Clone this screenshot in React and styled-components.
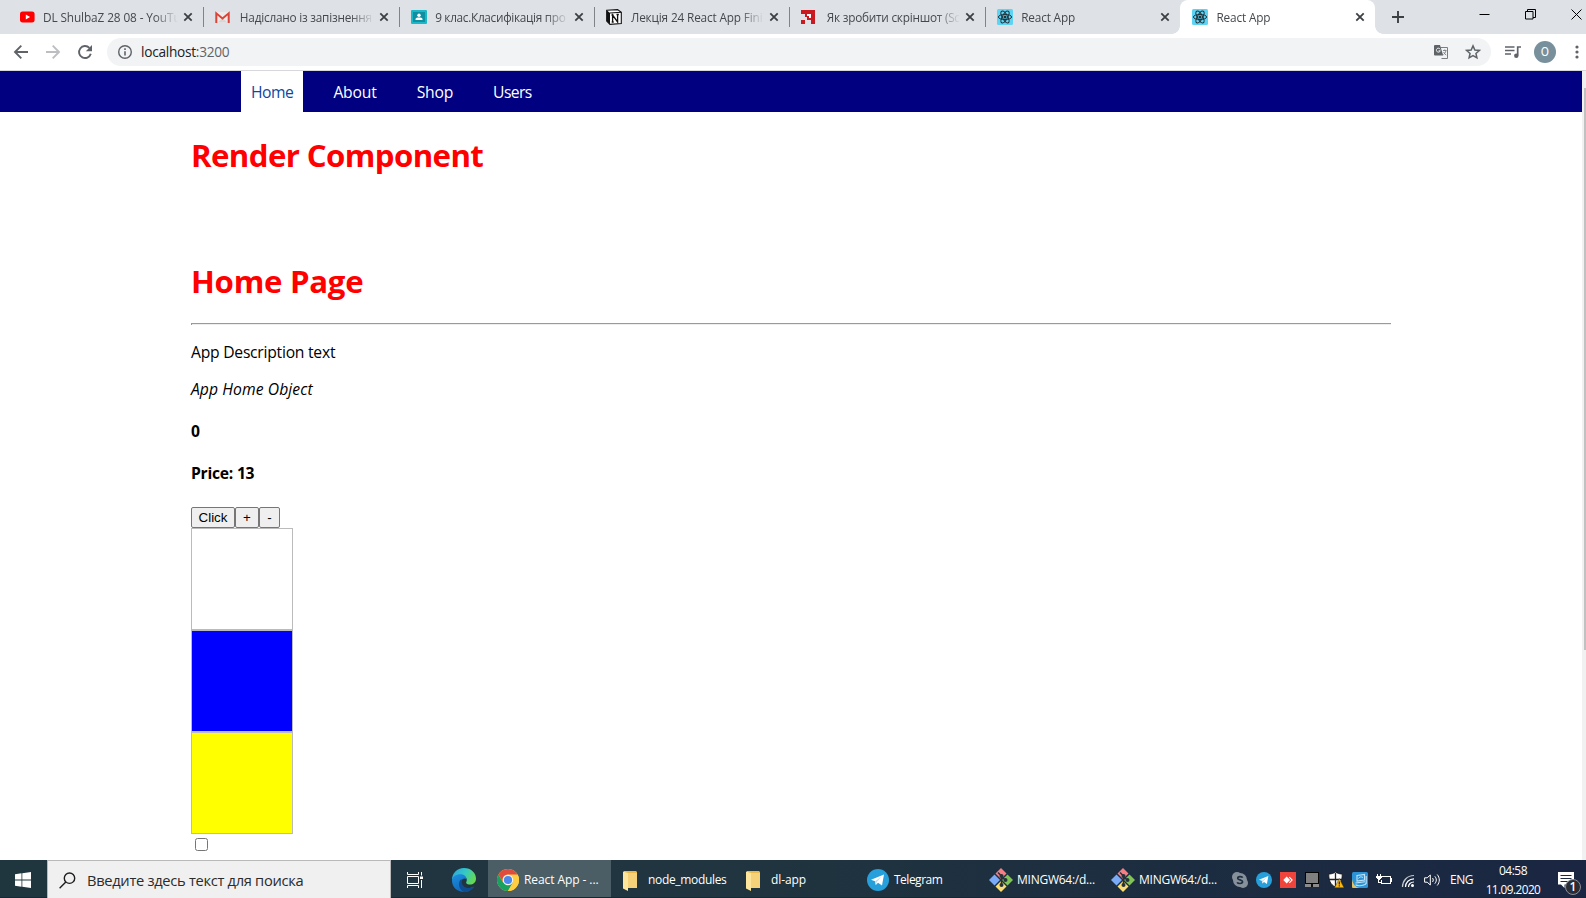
import React from 'react';
import styled, { createGlobalStyle } from 'styled-components';

const Global = createGlobalStyle`
  *, *::before, *::after { box-sizing: border-box; }
  body { margin: 0; background: #fff; overflow: hidden; }
`;

const uiFont = `'Open Sans', 'Noto Sans', sans-serif`;

const Screen = styled.div`
  width: 1586px;
  height: 898px;
  display: flex;
  flex-direction: column;
  overflow: hidden;
  font-family: ${uiFont};
`;

const Text = styled.span`
  font-size: ${(p) => p.$size || 12}px;
  letter-spacing: ${(p) => p.$ls || 0}px;
  white-space: pre;
`;

/* ---------- tab strip ---------- */
const TabStrip = styled.div`
  height: 34px;
  flex: none;
  display: flex;
  padding-left: 8px;
  background: #dee1e6;
`;

const Tab = styled.div`
  position: relative;
  width: 195.33px;
  flex: none;
  display: flex;
  align-items: center;
  padding: 0 7px 0 12px;
  color: #45494d;
  background: ${(p) => (p.$active ? '#fff' : 'transparent')};
  border-radius: 8px 8px 0 0;

  &::before,
  &::after {
    content: '';
    display: ${(p) => (p.$active ? 'block' : 'none')};
    position: absolute;
    bottom: 0;
    width: 8px;
    height: 8px;
  }
  &::before {
    left: -8px;
    background: radial-gradient(circle at 0 0, transparent 7.5px, #fff 8px);
  }
  &::after {
    right: -8px;
    background: radial-gradient(circle at 100% 0, transparent 7.5px, #fff 8px);
  }
`;

const Favicon = styled.span`
  width: 16px;
  height: 16px;
  flex: none;
  display: flex;
  margin-right: ${(p) => p.$gap || 8}px;
`;

const TabTitle = styled(Text)`
  flex: 1;
  min-width: 0;
  line-height: 20px;
  mask-image: linear-gradient(to right, #000 calc(100% - 24px), transparent 100%);
  margin-right: 2px;
`;

const TabClose = styled.span`
  width: 16px;
  height: 16px;
  flex: none;
  display: flex;
`;

const TabDivider = styled.span`
  width: 1px;
  height: 20px;
  margin: 7px -1px 0 0;
  flex: none;
  background: #808388;
`;

const NewTab = styled.span`
  width: 44px;
  padding-left: 1px;
  display: flex;
  align-items: center;
  justify-content: center;
`;

const WindowButtons = styled.div`
  margin-left: auto;
  display: flex;
  gap: 35px;
  padding: 9px 4px 0 0;
`;

/* ---------- toolbar ---------- */
const Toolbar = styled.div`
  height: 37px;
  flex: none;
  display: flex;
  align-items: center;
  padding: 0 3px 0 13px;
  background: #fff;
  border-bottom: 1px solid #d6d8db;
`;

const ToolIcon = styled.span`
  width: 16px;
  height: 16px;
  flex: none;
  display: flex;
  margin-right: ${(p) => p.$gap || 0}px;
`;

const Omnibox = styled.div`
  flex: none;
  width: 1384px;
  height: 28px;
  display: flex;
  align-items: center;
  padding: 0 10px;
  border-radius: 14px;
  background: #f1f3f4;
  margin-right: 14px;
`;

const Url = styled(Text)`
  flex: 1;
  line-height: 20px;
  color: #5f6368;
  b {
    font-weight: 400;
    color: #202124;
  }
`;

const Avatar = styled.span`
  width: 22px;
  height: 22px;
  border-radius: 50%;
  flex: none;
  display: flex;
  align-items: center;
  justify-content: center;
  background: #78909c;
  color: #fff;
  font: 12px/22px Roboto, sans-serif;
  margin: 0 18px 0 13px;
`;

/* ---------- web page ---------- */
const Viewport = styled.div`
  height: 789px;
  flex: none;
  display: flex;
  overflow: hidden;
  background: #fff;
`;

const Page = styled.main`
  width: 1582px;
`;

const ScrollTrack = styled.div`
  width: 4px;
  padding: 17px 0 0 2px;
  background: #f1f1f1;
`;

const ScrollThumb = styled.div`
  height: 562px;
  background: #c1c1c1;
`;

const NavBar = styled.nav`
  height: 41px;
  display: flex;
  padding-left: 231px;
  background: #000080;
`;

const NavLink = styled.a`
  width: ${(p) => p.$w}px;
  margin: 0 10px;
  padding-left: 10px;
  font-size: 15.7px;
  line-height: 43px;
  letter-spacing: ${(p) => p.$ls || 0}px;
  white-space: nowrap;
  color: ${(p) => (p.$active ? '#0d47a1' : '#fff')};
  background: ${(p) => (p.$active ? '#fff' : 'transparent')};
`;

const Container = styled.section`
  width: 1200px;
  margin: 0 auto;
  font-size: 15.7px;
  color: #000;
`;

const Title = styled.h1`
  margin: ${(p) => p.$top}px 0 0;
  font-size: 31.200px;
  line-height: 42px;
  font-weight: 700;
  letter-spacing: ${(p) => p.$ls || 0}px;
  color: #f00;
`;

const Rule = styled.hr`
  height: 2px;
  margin: 21px 0 17px;
  border: solid #9a9a9a;
  border-width: 1px 0 0 1px;
  background: #eee;
`;

const Line = styled.p`
  margin: 0 0 ${(p) => p.$bottom}px;
  line-height: 21px;
  font-style: ${(p) => (p.$italic ? 'italic' : 'normal')};
  font-weight: ${(p) => (p.$bold ? 700 : 400)};
  letter-spacing: ${(p) => p.$ls || 0}px;
`;

const ButtonRow = styled.div`
  display: flex;
`;

const Button = styled.button`
  width: ${(p) => p.$w}px;
  height: 21px;
  padding: 0;
  border: 1px solid #767676;
  border-radius: 2px;
  background: #efefef;
  color: #000;
  font: 13.333px/18px 'Liberation Sans', Arial, sans-serif;
`;

const Swatch = styled.div`
  width: 102px;
  height: 102px;
  border: 1px solid #bbb;
  background: ${(p) => p.$color};
`;

const Checkbox = styled.span`
  display: block;
  width: 13px;
  height: 13px;
  margin: 4px 0 0 4px;
  border: 1px solid #767676;
  border-radius: 2.5px;
  background: #fff;
`;

/* ---------- taskbar ---------- */
const Taskbar = styled.div`
  height: 38px;
  flex: none;
  display: flex;
  align-items: stretch;
  color: #fff;
  background: linear-gradient(to right, #20363f 0%, #20353f 45%, #1d2e40 70%, #1a2642 100%);
  border-bottom: 1px solid #1b2634;
`;

const Start = styled.div`
  width: 47px;
  flex: none;
  display: flex;
  padding: 12px 0 0 15px;
`;

const Search = styled.div`
  width: 344px;
  height: 38px;
  flex: none;
  display: flex;
  padding: 11px 0 0 11px;
  background: #f0f0f0;
  border: 1px solid #b9b9b9;
  border-bottom: 0;
  color: #2b2b2b;
`;

const SearchText = styled(Text)`
  margin-left: 11px;
  line-height: 20px;
  margin-top: -2px;
  height: 20px;
`;

const Task = styled.div`
  width: ${(p) => p.$w}px;
  flex: none;
  display: flex;
  align-items: center;
  padding: 3px 0 0 ${(p) => p.$pad}px;
  gap: ${(p) => p.$gap || 5}px;
  background: ${(p) => (p.$active ? '#4b5e66' : 'transparent')};
  svg { flex: none; }
`;

const TaskLabel = styled(Text)`
  line-height: 20px;
`;

const Tray = styled.div`
  display: flex;
  align-items: center;
  gap: 8px;
  width: ${(p) => p.$w}px;
  flex: none;
  padding-top: 2px;
  margin-left: ${(p) => p.$left || 0}px;
  svg { flex: none; }
`;

const Clock = styled.div`
  width: 60px;
  flex: none;
  margin-left: 9px;
  padding-top: 2px;
  display: flex;
  flex-direction: column;
  align-items: center;
  line-height: 18px;
`;

const Notify = styled.div`
  position: relative;
  width: 30px;
  flex: none;
  margin-left: 15px;
  padding-top: 12px;
`;

const Badge = styled.span`
  position: absolute;
  left: 7px;
  top: 19px;
  width: 16px;
  height: 16px;
  border-radius: 50%;
  border: 1px solid #8b8f98;
  background: #2a2d33;
  color: #fff;
  font-size: 12px;
  font-weight: 600;
  line-height: 14px;
  text-align: center;
`;

/* ---------- drawings ---------- */
const YouTube = () => (
  <svg width="16" height="16" viewBox="0 0 16 16">
    <rect x="0" y="2.4" width="14.6" height="11" rx="2.6" fill="#f00" />
    <path d="M5.8 5.4v5l4.3-2.5z" fill="#fff" />
  </svg>
);
const Gmail = () => (
  <svg width="16" height="16" viewBox="0 0 16 16">
    <path d="M1 3h13v11H1z" fill="#eceaea" />
    <path d="M2.5 13.5 7.5 9l5 4.500z" fill="#d8d5d5" />
    <path d="M1.300 14V4.300L7.500 9.400l6.200-5.100V14" fill="none" stroke="#db4437" strokeWidth="2" />
  </svg>
);
const Classroom = () => (
  <svg width="16" height="16" viewBox="0 0 16 16">
    <rect x="0" y="1" width="16" height="14" rx="1" fill="#1cb7c9" />
    <rect x="2" y="3" width="12" height="10" fill="#0f8f9f" />
    <circle cx="8" cy="6.300" r="1.700" fill="#fff" />
    <path d="M4.500 11V10.200C4.500 9 6.500 8.600 8 8.600s3.500.4 3.500 1.600V11z" fill="#fff" />
  </svg>
);
const Notion = () => (
  <svg width="16" height="16" viewBox="0 0 16 16">
    <path d="M.7 1.300 11.600.6l3.700 2.700v11.200L4 15.400.7 12z" fill="#fff" stroke="#111" strokeWidth="1.100" />
    <path d="M.7 1.300 4 4v11.400L.7 12z" fill="#111" />
    <path d="M3.800 4 15.300 3.300" stroke="#111" strokeWidth="1.100" />
    <path d="M6.600 13V6l5 7V5.500M5.500 6h2M10.500 5.500h2.300M5.700 13h2" stroke="#111" strokeWidth="1.300" fill="none" />
  </svg>
);
const RedMark = () => (
  <svg width="16" height="16" viewBox="0 0 16 16" shapeRendering="crispEdges">
    <path d="M0 1h14v14h-4v-4H6V8H4V5H0zM0 11h4v4H0z" fill="#c91a22" />
    <path d="M6 5h4v4H8V7H6z" fill="#fff" />
  </svg>
);
const ReactLogo = () => (
  <svg width="16" height="16" viewBox="0 0 16 16">
    <rect width="16" height="16" rx="1.500" fill="#5fd3f3" />
    <g fill="none" stroke="#20323a" strokeWidth="1">
      <ellipse cx="8" cy="8" rx="6.600" ry="2.600" />
      <ellipse cx="8" cy="8" rx="6.600" ry="2.600" transform="rotate(60 8 8)" />
      <ellipse cx="8" cy="8" rx="6.600" ry="2.600" transform="rotate(120 8 8)" />
    </g>
    <circle cx="8" cy="8" r="1.500" fill="#20323a" />
  </svg>
);
const Cross = () => (
  <svg width="16" height="16" viewBox="0 0 16 16">
    <path d="m4.300 4.300 7.400 7.400m0-7.400-7.400 7.400" stroke="#3c4043" strokeWidth="1.800" />
  </svg>
);
const Arrow = ({ flip, color }) => (
  <svg width="16" height="16" viewBox="0 0 16 16">
    <path
      transform={flip ? 'rotate(180 8 8)' : undefined}
      d="M15 8H2.200M8.300 1.700 2 8l6.300 6.300"
      fill="none"
      stroke={color}
      strokeWidth="1.900"
    />
  </svg>
);
const Reload = () => (
  <svg width="16" height="16" viewBox="0 0 16 16">
    <path d="M13.800 9.800A6 6 0 1 1 12.400 3.900" fill="none" stroke="#5f6368" strokeWidth="1.900" />
    <path d="M15 1v6.200H8.800z" fill="#5f6368" />
  </svg>
);
const Info = () => (
  <svg width="16" height="16" viewBox="0 0 16 16">
    <circle cx="8" cy="8" r="6.300" fill="none" stroke="#5f6368" strokeWidth="1.400" />
    <path d="M8 7.200v4.300M8 4.300v1.600" stroke="#5f6368" strokeWidth="1.600" />
  </svg>
);
const Translate = () => (
  <svg width="16" height="16" viewBox="0 0 16 16">
    <path d="M7.500 3.500H14.500V14.500H8.500" fill="none" stroke="#7a7e82" strokeWidth="1" />
    <path d="M2 1h5l3.200 10.500H2a1 1 0 0 1-1-1V2a1 1 0 0 1 1-1z" fill="#5f6368" />
    <path d="M7.200 5.300A2 2 0 1 0 7.300 6.800H5.600" fill="none" stroke="#f1f3f4" strokeWidth="1" />
    <path d="M10 6.500h3.500M11.800 5.500v1M12.900 6.700c-.3 1.800-1.200 2.900-2.400 3.800M10.600 8c.6 1.400 1.500 2.400 2.600 3" fill="none" stroke="#7a7e82" strokeWidth=".9" />
  </svg>
);
const Star = () => (
  <svg width="16" height="16" viewBox="0 0 16 16">
    <path d="m8 1.900 1.850 4.100 4.450.45-3.350 3 .95 4.400L8 11.550 4.100 13.850l.95-4.400-3.350-3L6.150 6z" fill="none" stroke="#5f6368" strokeWidth="1.500" />
  </svg>
);
const Queue = () => (
  <svg width="16" height="16" viewBox="0 0 16 16">
    <path d="M0 3h9.500M0 6.500h9.500M0 10h6" stroke="#5f6368" strokeWidth="1.600" />
    <path d="M12.700 11.500V3H16" fill="none" stroke="#5f6368" strokeWidth="1.700" />
    <circle cx="11.300" cy="11.700" r="2.200" fill="#5f6368" />
  </svg>
);
const Kebab = () => (
  <svg width="6" height="16" viewBox="0 0 6 16" fill="#5f6368">
    <circle cx="3" cy="3" r="1.600" />
    <circle cx="3" cy="8" r="1.600" />
    <circle cx="3" cy="13" r="1.600" />
  </svg>
);
const WinLogo = () => (
  <svg width="16" height="16" viewBox="0 0 16 16" fill="#fff">
    <path d="M0 2.200 6.500 1.300V7.500H0zM7.300 1.200 16 0V7.500H7.300zM0 8.400H6.500V14.700L0 13.800zM7.300 8.400H16V16L7.300 14.800z" />
  </svg>
);
const Magnifier = () => (
  <svg width="17" height="17" viewBox="0 0 17 17" fill="none" stroke="#1d1d1d" strokeWidth="1.400">
    <circle cx="10.500" cy="6.200" r="5.200" />
    <path d="M6.800 10 .6 16.200" />
  </svg>
);
const TaskView = () => (
  <svg width="17" height="16" viewBox="0 0 17 16" fill="none" stroke="#fff" strokeWidth="1">
    <path d="M.5 0v2.500h11V0M.5 16v-2.500h11V16M.5 4.500h11v7H.5zM14.500 0v3.500M14.500 8v8" />
    <rect x="13" y="4.500" width="3" height="2.500" fill="#fff" stroke="none" />
  </svg>
);
const Edge = () => (
  <svg width="24" height="24" viewBox="0 0 24 24">
    <defs>
      <linearGradient id="edgeTop" x1="0" y1="0.200" x2="1" y2="0.600">
        <stop offset="0" stopColor="#2aa5e0" />
        <stop offset=".5" stopColor="#35c9c4" />
        <stop offset="1" stopColor="#67d94e" />
      </linearGradient>
      <linearGradient id="edgeLow" x1="0" y1="0" x2=".5" y2="1">
        <stop offset="0" stopColor="#1c8fe0" />
        <stop offset="1" stopColor="#1266b8" />
      </linearGradient>
    </defs>
    <path d="M0 12C0 5 5 0 12 0s12 5 12 10.500c0 4-3 6-6 6-3.500 0-4.500-1.500-3.500-3 .8-1.300.5-5.500-4.500-5.500-4.500 0-9 2-10 4z" fill="url(#edgeTop)" />
    <path d="M0 12.500C.3 8.500 4.500 6.300 8 6.300c4 0 6.300 2 6.500 4.700-1.600-1.200-5.500-.5-5.500 3.500 0 4.500 5 8 13 4-2 3.500-6 5.500-10 5.500C5 24 0 19 0 12.500z" fill="url(#edgeLow)" />
    <path d="M9.500 11c-4.500 3-2.500 11 2.500 13 4 0 8-2 10-5.500-8 4-13-.5-12.500-7.500z" fill="#0d4d92" />
  </svg>
);
const Chrome = () => (
  <svg width="22" height="22" viewBox="0 0 22 22">
    <circle cx="11" cy="11" r="11" fill="#ffcd42" />
    <path d="M1.470 5.500A11 11 0 0 0 11 22l4.760-8.250L11 11 6.240 13.750z" fill="#1aa15f" />
    <path d="M20.530 5.500A11 11 0 0 1 11 22l4.760-8.250V5.500z" fill="#ffcd42" />
    <path d="M1.470 5.500A11 11 0 0 1 20.530 5.500H11a5.500 5.500 0 0 0-4.760 8.250z" fill="#de4b3f" />
    <circle cx="11" cy="11" r="5.200" fill="#f4f4f4" />
    <circle cx="11" cy="11" r="4.100" fill="#4a87ee" />
  </svg>
);
const Folder = () => (
  <svg width="15" height="21" viewBox="0 0 15 21">
    <path d="M1 1h12l1 1v16H5L1 15z" fill="#e9b94e" />
    <path d="M4 3h10v15H4z" fill="#f5d27a" />
    <path d="M0 1.500 5 3v18L0 18.500z" fill="#fde69b" />
  </svg>
);
const Telegram = ({ size }) => (
  <svg width={size} height={size} viewBox="0 0 22 22">
    <circle cx="11" cy="11" r="11" fill="#279fda" />
    <path d="M4 10.800 17 5.500 15 16.500l-4-2.800-2.200 2.200-.8-3.700z" fill="#fff" />
    <path d="m8 12.200 6.500-4.500-4.700 5.200-1 3z" fill="#c3dcec" />
  </svg>
);
const GitBash = () => (
  <svg width="24" height="24" viewBox="0 0 24 24">
    <path d="m12 0 5.500 5.500L12 11 6.500 5.500z" fill="#f47f84" />
    <path d="m18.500 6.500 5.500 5.500-5.500 5.500L13 12z" fill="#80c456" />
    <path d="M5.500 6.500 11 12l-5.500 5.500L0 12z" fill="#7baaf7" />
    <path d="m12 13 5.500 5.500L12 24l-5.500-5.500z" fill="#fbdc73" />
    <path d="M9 4.500 12.500 8v9M12.500 9l4 3" fill="none" stroke="#26323a" strokeWidth="1.500" />
    <circle cx="12.500" cy="8" r="2" fill="#26323a" />
    <circle cx="16.500" cy="12" r="2" fill="#26323a" />
    <circle cx="12.500" cy="17" r="2" fill="#26323a" />
  </svg>
);
const Skype = () => (
  <svg width="16" height="16" viewBox="0 0 16 16">
    <circle cx="5" cy="5" r="5" fill="#87919b" />
    <circle cx="11" cy="11" r="5" fill="#87919b" />
    <circle cx="8" cy="8" r="7" fill="#87919b" />
    <path d="M10.700 5.700C10 4.200 5.700 4.200 5.700 6.200c0 2.100 4.900 1.200 4.900 3.600 0 2.200-4.700 2.200-5.400.4" fill="none" stroke="#1f2f40" strokeWidth="1.700" />
  </svg>
);
const AnyDesk = () => (
  <svg width="16" height="16" viewBox="0 0 16 16">
    <rect width="16" height="16" fill="#ef443b" />
    <path d="M6.700 4.600 10.100 8l-3.400 3.400L3.300 8z" fill="#fff" />
    <path d="m9.700 4.800 3.200 3.200-3.200 3.200-.8-.8L11.300 8 8.900 5.600z" fill="#fff" />
  </svg>
);
const Monitor = () => (
  <svg width="16" height="16" viewBox="0 0 16 16" shapeRendering="crispEdges">
    <rect x="1" y="0" width="14" height="12" fill="#050505" />
    <rect x="2" y="1" width="12" height="10" fill="#808080" />
    <path d="M1 12h6v3H1zM9 12h6v3H9z" fill="#8b8b8b" />
    <path d="M7 12h2v3H7z" fill="#111" />
  </svg>
);
const Shield = () => (
  <svg width="16" height="16" viewBox="0 0 16 16">
    <path d="M7.500 0C5.500 1.500 3 2 .8 2 .8 8 2 12.500 7.500 15 13 12.500 14.200 8 14.200 2 12 2 9.500 1.500 7.500 0z" fill="#fff" stroke="#111" strokeWidth=".8" />
    <path d="M7.500 1v13M1 7.500h13" stroke="#222" strokeWidth="1.300" />
    <path d="M11.300 6.500 16 15.700H6.600z" fill="#fdb913" stroke="#4a3a05" strokeWidth=".5" />
    <path d="M11.300 9.500v3M11.300 13.300v1.200" stroke="#222" strokeWidth="1.200" />
  </svg>
);
const BluePc = () => (
  <svg width="16" height="16" viewBox="0 0 16 16">
    <rect width="16" height="16" rx="1.500" fill="#2c93d6" />
    <path d="M0 6c0 5 3 9 7.500 10H1.500A1.500 1.500 0 0 1 0 14.500z" fill="#e5c062" />
    <path d="M5 3.500 12.500 2.500V8L5 9zM3.500 11l9.500-1.200M3.500 12.800c2 1.500 7 1 9.500-.3l1.200-1V4" fill="none" stroke="#bfe3fa" strokeWidth="1.100" />
    <path d="M6.500 6.500c1-2 3-2 4.500-1" fill="none" stroke="#d9f0fd" strokeWidth=".9" />
  </svg>
);
const Battery = () => (
  <svg width="16" height="16" viewBox="0 0 16 16" shapeRendering="crispEdges" fill="#fff">
    <path d="M6 4h9v1H6zM14 5h1v6h-1zM5 11h10v1H5zM5 8h1v3H5zM15 6h1v4h-1zM7 6h6v4H7zM1 2h1v2H1zM4 2h1v2H4zM0 4h6v2H0zM1 6h4v1H1zM2 7h1v4H2zM3 7h1v1H3zM2 10h3v1H2z" />
    <path d="M7 6h6v4H7z" fill="#1b2842" />
  </svg>
);
const Wifi = () => (
  <svg width="16" height="16" viewBox="0 0 16 16" fill="none" stroke="#fff" strokeWidth="1.200">
    <path d="M2.500 15C2.500 9 7 3.500 14 3.500" opacity=".75" />
    <path d="M5.500 15c0-4.500 3.500-8.200 8.500-8.200M8.500 15c0-2.700 2-5 5.500-5" />
    <circle cx="12.500" cy="13.500" r="1.500" fill="#fff" stroke="none" />
  </svg>
);
const Speaker = () => (
  <svg width="16" height="16" viewBox="0 0 16 16" fill="none" stroke="#fff" strokeWidth="1">
    <path d="M.6 5.800h2.600L6.300 3v10L3.200 10.200H.6zM8.500 6c1 1.300 1 2.700 0 4M10.800 4.300c2 2.300 2 5.100 0 7.400M13.200 2.500c2.800 3.400 2.800 7.600 0 11" />
  </svg>
);
const Note = () => (
  <svg width="16" height="17" viewBox="0 0 16 17">
    <path d="M0 0h16v12.500H6.500V16L3 12.500H0z" fill="#fff" />
    <path d="M2.500 3.500h11M2.500 6.500h11M2.500 9.500h7" stroke="#1c2940" strokeWidth="1" />
  </svg>
);

const TABS = [
  { icon: YouTube, title: 'DL ShulbaZ 28 08 - YouTu', ls: -0.1, gap: 7 },
  { icon: Gmail, title: 'Надіслано із запізнення', ls: -0.22, gap: 8.5 },
  { icon: Classroom, title: '9 клас.Класифікація про', ls: -0.3, gap: 8.5 },
  { icon: Notion, title: 'Лекція 24 React App Fini', ls: -0.15, gap: 9 },
  { icon: RedMark, title: 'Як зробити скріншот (Sc', ls: -0.24, gap: 9.5 },
  { icon: ReactLogo, title: 'React App', ls: -0.15, gap: 8.5 },
  { icon: ReactLogo, title: 'React App', ls: -0.15, gap: 8.5, active: true },
];

export default function App() {
  return (
    <Screen>
      <Global />
      <TabStrip>
        {TABS.map(({ icon: Icon, title, ls, gap, active }, i) => (
          <React.Fragment key={i}>
            <Tab $active={active}>
              <Favicon $gap={gap}><Icon /></Favicon>
              <TabTitle $size={11.8} $ls={ls}>{title}</TabTitle>
              <TabClose><Cross /></TabClose>
            </Tab>
            {i < 5 && <TabDivider />}
          </React.Fragment>
        ))}
        <NewTab>
          <svg width="12" height="12" viewBox="0 0 12 12"><path d="M6 0v12M0 6h12" stroke="#3c4043" strokeWidth="1.900" /></svg>
        </NewTab>
        <WindowButtons>
          <svg width="11" height="11" viewBox="0 0 11 11"><path d="M.5 5.500h10" stroke="#000" /></svg>
          <svg width="11" height="11" viewBox="0 0 11 11" fill="none" stroke="#000"><path d="M.5 2.500h7.500v7.500H.5zM2.500 2.500v-2h8v8h-2.500" /></svg>
          <svg width="11" height="11" viewBox="0 0 11 11"><path d="m.5.5 10 10m0-10-10 10" stroke="#000" /></svg>
        </WindowButtons>
      </TabStrip>

      <Toolbar>
        <ToolIcon $gap={16}><Arrow color="#5f6368" /></ToolIcon>
        <ToolIcon $gap={16}><Arrow flip color="#bcbec1" /></ToolIcon>
        <ToolIcon $gap={14}><Reload /></ToolIcon>
        <Omnibox>
          <ToolIcon $gap={8}><Info /></ToolIcon>
          <Url $size={13.7} $ls={-0.28}><b>localhost</b>:3200</Url>
          <ToolIcon $gap={16}><Translate /></ToolIcon>
          <ToolIcon><Star /></ToolIcon>
        </Omnibox>
        <ToolIcon><Queue /></ToolIcon>
        <Avatar>O</Avatar>
        <Kebab />
      </Toolbar>

      <Viewport>
        <Page>
          <NavBar>
            <NavLink $w={62.4} $ls={-0.5} $active>Home</NavLink>
            <NavLink $w={63.3} $ls={-0.2}>About</NavLink>
            <NavLink $w={56.4} $ls={-0.2}>Shop</NavLink>
            <NavLink $w={58} $ls={-0.6}>Users</NavLink>
          </NavBar>
          <Container>
            <Title $top={22} $ls={-0.59}>Render Component</Title>
            <Title $top={84} $ls={-0.27}>Home Page</Title>
            <Rule />
            <Line $ls={-0.25} $bottom={16}>App Description text</Line>
            <Line $ls={0.08} $italic $bottom={21}>App Home Object</Line>
            <Line $bold $bottom={21}>0</Line>
            <Line $ls={-0.25} $bold $bottom={23}>Price: 13</Line>
            <ButtonRow>
              <Button $w={44}>Click</Button>
              <Button $w={24}>+</Button>
              <Button $w={21}>-</Button>
            </ButtonRow>
            <Swatch $color="#fff" />
            <Swatch $color="#00f" />
            <Swatch $color="#ff0" />
            <Checkbox />
          </Container>
        </Page>
        <ScrollTrack><ScrollThumb /></ScrollTrack>
      </Viewport>

      <Taskbar>
        <Start><WinLogo /></Start>
        <Search>
          <Magnifier />
          <SearchText $size={14.7} $ls={-0.31}>Введите здесь текст для поиска</SearchText>
        </Search>
        <Task $w={49} $pad={16}><TaskView /></Task>
        <Task $w={48} $pad={12}><Edge /></Task>
        <Task $w={123} $pad={9} $active><Chrome /><TaskLabel $ls={-0.08}>React App - ...</TaskLabel></Task>
        <Task $w={123} $pad={12} $gap={10}><Folder /><TaskLabel $ls={-0.33}>node_modules</TaskLabel></Task>
        <Task $w={121} $pad={12} $gap={10}><Folder /><TaskLabel $ls={-0.1}>dl-app</TaskLabel></Task>
        <Task $w={122} $pad={12}><Telegram size={22} /><TaskLabel $ls={-0.5}>Telegram</TaskLabel></Task>
        <Task $w={122} $pad={12} $gap={4}><GitBash /><TaskLabel $ls={-0.25}>MINGW64:/d...</TaskLabel></Task>
        <Task $w={122} $pad={12} $gap={4}><GitBash /><TaskLabel $ls={-0.25}>MINGW64:/d...</TaskLabel></Task>
        <Tray $w={208} $left={11}>
          <Skype />
          <Telegram size={16} />
          <AnyDesk />
          <Monitor />
          <Shield />
          <BluePc />
          <Battery />
          <Wifi />
          <Speaker />
        </Tray>
        <Tray $w={24} $left={10}><Text $ls={-0.45}>ENG</Text></Tray>
        <Clock><Text $ls={-0.5}>04:58</Text><Text $size={11.8} $ls={-0.55}>11.09.2020</Text></Clock>
        <Notify><Note /><Badge>1</Badge></Notify>
      </Taskbar>
    </Screen>
  );
}
